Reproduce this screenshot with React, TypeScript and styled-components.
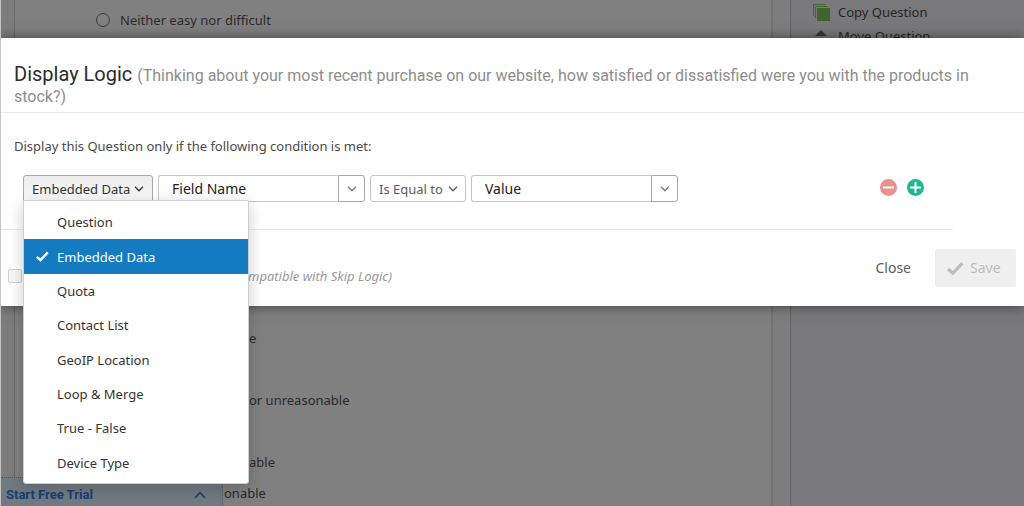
import React, { useState } from "react";
import styled, { createGlobalStyle } from "styled-components";

const headingFont = `Roboto, "Liberation Sans", sans-serif`;

const GlobalStyle = createGlobalStyle`
  *, *::before, *::after { box-sizing: border-box; }
  body {
    margin: 0;
    background: #7d7d7d;
    color: #333;
    font-family: "Noto Sans", "Liberation Sans", sans-serif;
    font-size: 13px;
    line-height: 20px;
  }
  button, input, select { font: inherit; color: inherit; margin: 0; }
`;

const Page = styled.div`
  position: relative;
  display: flex;
  height: 100vh;
  overflow: hidden;
  border-left: 1px solid #c4c4c4;
`;

const Survey = styled.main`
  flex: 1;
  margin: 0 17px 0 13px;
  padding: 10px 0 0 81px;
  border-left: 1px solid #6a6a6a;
  border-right: 2px solid #727272;
  background: #808080;
  color: #2b2b2b;
`;

const Choice = styled.label`
  display: flex;
  align-items: center;
  gap: 10px;
  height: 20px;
`;

const Radio = styled.input`
  appearance: none;
  width: 14px;
  height: 14px;
  border: 1px solid #3c3c3c;
  border-radius: 50%;
`;

const ChoiceList = styled.ul`
  display: flex;
  flex-direction: column;
  gap: 42px;
  margin: 298px 0 0;
  padding: 0 0 0 153px;
  list-style: none;
`;

const LastChoice = styled.p`
  margin: 11px 0 0;
  padding-left: 128px;
`;

const SidePanel = styled.aside`
  flex: 0 0 234px;
  display: flex;
  flex-direction: column;
  gap: 4px;
  padding: 2px 0 0 22px;
  border-left: 1px solid #626262;
  background: #79797b;
`;

const SideLink = styled.a`
  display: flex;
  align-items: center;
  gap: 7px;
  color: #252525;
  text-decoration: none;
`;

const TrialButton = styled.button`
  position: absolute;
  left: 0;
  bottom: 0;
  display: flex;
  align-items: center;
  justify-content: space-between;
  width: 222px;
  height: 29px;
  padding: 6px 16px 0 5px;
  border: 1px dotted #3d5c80;
  border-width: 1px 1px 0 0;
  background: #717981;
  color: #153f74;
  font-family: ${headingFont};
  font-weight: 700;
`;

const Dialog = styled.section`
  position: absolute;
  top: 38px;
  left: 0;
  right: 0;
  background: #fff;
  box-shadow: 0 0 12px rgba(0, 0, 0, 0.5);
`;

const Header = styled.header`
  padding: 26px 40px 6px 13px;
  border-bottom: 1px solid #e8e8e8;
`;

const Title = styled.h1`
  margin: 0;
  color: #2b2b2b;
  font-family: ${headingFont};
  font-size: 20px;
  font-weight: 400;
  line-height: 21px;
`;

const Subtitle = styled.span`
  color: #8d8d8d;
  font-size: 16px;
  line-height: 16px;
`;

const Body = styled.div`
  margin-right: 71px;
  padding: 23px 29px 27px 13px;
  border-bottom: 1px solid #e8e8e8;
`;

const Intro = styled.p`
  margin: 0 0 19px;
  color: #4a4a4a;
`;

const Condition = styled.div`
  display: flex;
  align-items: center;
  gap: 5px;
  padding-left: 9px;
`;

const Picker = styled.div`
  position: relative;
  flex: 0 0 130px;
`;

const PickerButton = styled.button`
  display: flex;
  align-items: center;
  justify-content: space-between;
  width: 100%;
  height: 27px;
  padding: 0 8px;
  border: 1px solid #a8a8a8;
  border-radius: 3px 3px 0 0;
  background: linear-gradient(#ececec, #fafafa);
  white-space: nowrap;
`;

const Menu = styled.ul`
  position: absolute;
  top: 25px;
  left: 0;
  z-index: 1;
  display: grid;
  grid-template-rows: repeat(8, 1fr);
  width: 226px;
  height: 284px;
  margin: 0;
  padding: 4px 0 3px;
  border: 1px solid #cfcfcf;
  border-radius: 0 0 3px 3px;
  background: #fff;
  box-shadow: 0 4px 16px rgba(0, 0, 0, 0.2);
  list-style: none;
`;

const Option = styled.button<{ $selected: boolean }>`
  display: grid;
  grid-template-columns: 13px 1fr;
  gap: 8px;
  align-items: center;
  width: 100%;
  height: 100%;
  padding: 0 12px;
  border: 0;
  background: ${(p) => (p.$selected ? "#147bc1" : "transparent")};
  color: ${(p) => (p.$selected ? "#fff" : "#333")};
  text-align: left;
`;

const Combo = styled.div`
  display: flex;
  flex: 0 1 207px;
  min-width: 0;
  height: 27px;
`;

const ComboInput = styled.input`
  flex: 1;
  min-width: 0;
  padding: 0 13px;
  border: 1px solid #c4c4c4;
  border-right: 0;
  border-radius: 3px 0 0 3px;
  background: #fff;
  font-size: 14px;

  &::placeholder { color: #222; opacity: 1; }
`;

const ComboButton = styled.button`
  display: grid;
  place-items: center;
  width: 27px;
  padding: 0;
  border: 1px solid #a8a8a8;
  border-radius: 0 3px 3px 0;
  background: #fff;
  color: #777;
`;

const SelectBox = styled.div`
  display: grid;
  flex: 0 0 96px;
  align-items: center;
  color: #5c5c5c;

  > * { grid-area: 1 / 1; }
  > svg { justify-self: end; margin-right: 8px; pointer-events: none; }
`;

const Select = styled.select`
  appearance: none;
  width: 100%;
  height: 27px;
  padding: 0 8px;
  border: 1px solid #c4c4c4;
  border-radius: 3px;
  background: #fff;
`;

const RowActions = styled.div`
  display: flex;
  gap: 10px;
  margin-left: auto;
  padding-bottom: 2px;
`;

const RoundButton = styled.button<{ $color: string }>`
  display: grid;
  place-items: center;
  width: 17px;
  height: 17px;
  padding: 0;
  border: 0;
  border-radius: 50%;
  background: ${(p) => p.$color};
  color: #fff;
`;

const Footer = styled.footer`
  display: flex;
  align-items: center;
  justify-content: space-between;
  padding: 19px 8px 19px 7px;
`;

const PageToggle = styled.label`
  display: flex;
  align-items: center;
  gap: 226px;
  padding-top: 16px;
  color: #999;
  font-style: italic;
`;

const Checkbox = styled.input`
  appearance: none;
  width: 14px;
  height: 14px;
  border: 1px solid #cfcfcf;
  border-radius: 2px;
  background: #f7f7f7;
`;

const FooterActions = styled.div`
  display: flex;
  gap: 12px;
`;

const FooterButton = styled.button<{ $filled?: boolean }>`
  display: flex;
  align-items: center;
  gap: 6px;
  height: 38px;
  padding: 0 12px;
  width: ${(p) => (p.$filled ? "81px" : "auto")};
  border: 0;
  border-radius: 3px;
  background: ${(p) => (p.$filled ? "#efefef" : "transparent")};
  color: ${(p) => (p.$filled ? "#bdbdbd" : "#5c5c5c")};
  font-size: 14px;
`;

const Chevron = ({ up = false }: { up?: boolean }) =>
  up ? (
    <svg width="12" height="8" viewBox="0 0 12 8" fill="none" stroke="currentColor" strokeWidth="1.6" aria-hidden>
      <path d="M1 6.8 6 1.6 11 6.8" />
    </svg>
  ) : (
    <svg width="10" height="6" viewBox="0 0 10 6" fill="none" stroke="currentColor" strokeWidth="1.3" aria-hidden>
      <path d="M1 0.8 5 4.8 9 0.8" />
    </svg>
  );

const Check = ({ size = 13 }: { size?: number }) => (
  <svg width={size} height={size} viewBox="0 0 16 16" fill="none" stroke="currentColor" strokeWidth="3" aria-hidden>
    <path d="M1 8.5 5.5 12.5 14.5 3" />
  </svg>
);

const CopyIcon = () => (
  <svg width="18" height="18" viewBox="0 0 18 18" aria-hidden>
    <path d="M0.5 13V1.5H12M2.5 15V3.5H14" fill="none" stroke="#45642f" />
    <rect x="4" y="5" width="13" height="13" fill="#3f662a" />
  </svg>
);

const MoveIcon = () => (
  <svg width="18" height="18" viewBox="0 0 18 18" aria-hidden>
    <path d="M8 3 14 9H2Z" fill="#3a3a3a" />
    <path d="M8 17 14 11H2Z" fill="#3a3a3a" />
  </svg>
);

const sources = [
  "Question",
  "Embedded Data",
  "Quota",
  "Contact List",
  "GeoIP Location",
  "Loop & Merge",
  "True - False",
  "Device Type",
];

const ComboBox = ({ label }: { label: string }) => (
  <Combo>
    <ComboInput aria-label={label} placeholder={label} />
    <ComboButton aria-label={`Show ${label} choices`}>
      <Chevron />
    </ComboButton>
  </Combo>
);

export default function App() {
  const [source, setSource] = useState("Embedded Data");

  return (
    <>
      <GlobalStyle />
      <Page>
        <Survey>
          <Choice>
            <Radio type="radio" name="effort" />
            Neither easy nor difficult
          </Choice>
          <ChoiceList>
            <li>e</li>
            <li>or unreasonable</li>
            <li>able</li>
          </ChoiceList>
          <LastChoice>onable</LastChoice>
        </Survey>
        <SidePanel>
          <SideLink href="#copy"><CopyIcon />Copy Question</SideLink>
          <SideLink href="#move"><MoveIcon />Move Question</SideLink>
        </SidePanel>
        <TrialButton>
          Start Free Trial
          <Chevron up />
        </TrialButton>

        <Dialog role="dialog" aria-labelledby="dialog-title">
          <Header>
            <Title id="dialog-title">
              Display Logic{" "}
              <Subtitle>
                (Thinking about your most recent purchase on our website, how satisfied or dissatisfied were you with the products in stock?)
              </Subtitle>
            </Title>
          </Header>
          <Body>
            <Intro>Display this Question only if the following condition is met:</Intro>
            <Condition>
              <Picker>
                <PickerButton aria-haspopup="listbox" aria-expanded>
                  {source}
                  <Chevron />
                </PickerButton>
                <Menu>
                  {sources.map((name) => (
                    <li key={name}>
                      <Option $selected={name === source} onClick={() => setSource(name)}>
                        {name === source ? <Check /> : <span />}
                        {name}
                      </Option>
                    </li>
                  ))}
                </Menu>
              </Picker>
              <ComboBox label="Field Name" />
              <SelectBox>
                <Select aria-label="Comparison">
                  <option>Is Equal to</option>
                </Select>
                <Chevron />
              </SelectBox>
              <ComboBox label="Value" />
              <RowActions>
                <RoundButton $color="#e8918e" aria-label="Remove condition">
                  <svg width="11" height="11" viewBox="0 0 11 11" stroke="currentColor" strokeWidth="2"><path d="M0 5.5H11" /></svg>
                </RoundButton>
                <RoundButton $color="#1cb893" aria-label="Add condition">
                  <svg width="11" height="11" viewBox="0 0 11 11" stroke="currentColor" strokeWidth="2"><path d="M0 5.5H11M5.5 0V11" /></svg>
                </RoundButton>
              </RowActions>
            </Condition>
          </Body>
          <Footer>
            <PageToggle>
              <Checkbox type="checkbox" />
              mpatible with Skip Logic)
            </PageToggle>
            <FooterActions>
              <FooterButton>Close</FooterButton>
              <FooterButton $filled disabled><Check size={17} />Save</FooterButton>
            </FooterActions>
          </Footer>
        </Dialog>
      </Page>
    </>
  );
}
